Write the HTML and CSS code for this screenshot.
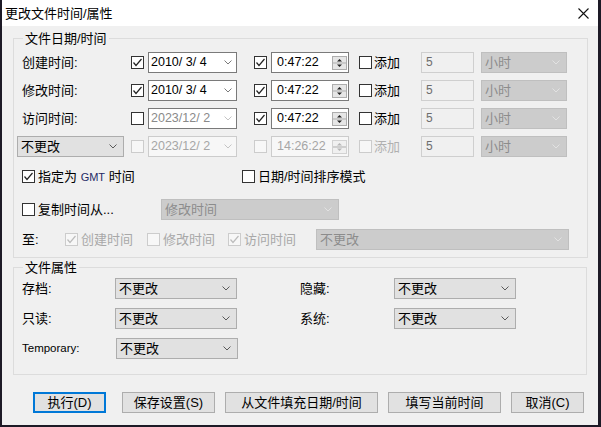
FILE: index.html
```html
<!DOCTYPE html>
<html lang="zh-CN">
<head>
<meta charset="utf-8">
<title>更改文件时间/属性</title>
<link rel="stylesheet" href="styles.css">
</head>
<body>
<div class="window">
  <div class="titlebar">
    <span class="title">更改文件时间/属性</span>
    <svg class="close" width="11" height="11" viewBox="0 0 11 11"><path d="M0.5 0.5L10.5 10.5M10.5 0.5L0.5 10.5" stroke="#111" stroke-width="1.1" fill="none"/></svg>
  </div>
  <div class="client">
    <div class="group g-time">
      <div class="legend">文件日期/时间</div>
      <div class="tgrid">
        <!-- row 1 -->
        <span class="lbl">创建时间:</span>
        <span class="cb"><svg viewBox="0 0 11 11"><polyline points="1.5,5.5 4,8.5 9.5,2" class="ck"/></svg></span>
        <span class="field date"><span class="val">2010/ 3/ 4</span><svg class="chev" viewBox="0 0 8 5"><polyline points="0.5,0.5 4,4 7.5,0.5"/></svg></span>
        <span class="cb"><svg viewBox="0 0 11 11"><polyline points="1.5,5.5 4,8.5 9.5,2" class="ck"/></svg></span>
        <span class="field time"><span class="val">0:47:22</span><svg class="spin" viewBox="0 0 15 14"><rect x="0.5" y="0.5" width="14" height="13" class="sp-box"/><line x1="1" y1="7" x2="14" y2="7" class="sp-line"/><polygon points="7.5,3 5,5.5 10,5.5" class="sp-tri"/><polygon points="7.5,11 5,8.5 10,8.5" class="sp-tri"/></svg></span>
        <span class="add"><span class="cb"></span><span>添加</span></span>
        <span class="edit">5</span>
        <span class="combo dis"><span class="val">小时</span><svg class="chev" viewBox="0 0 8 5"><polyline points="0.5,0.5 4,4 7.5,0.5"/></svg></span>

        <!-- row 2 -->
        <span class="lbl">修改时间:</span>
        <span class="cb"><svg viewBox="0 0 11 11"><polyline points="1.5,5.5 4,8.5 9.5,2" class="ck"/></svg></span>
        <span class="field date"><span class="val">2010/ 3/ 4</span><svg class="chev" viewBox="0 0 8 5"><polyline points="0.5,0.5 4,4 7.5,0.5"/></svg></span>
        <span class="cb"><svg viewBox="0 0 11 11"><polyline points="1.5,5.5 4,8.5 9.5,2" class="ck"/></svg></span>
        <span class="field time"><span class="val">0:47:22</span><svg class="spin" viewBox="0 0 15 14"><rect x="0.5" y="0.5" width="14" height="13" class="sp-box"/><line x1="1" y1="7" x2="14" y2="7" class="sp-line"/><polygon points="7.5,3 5,5.5 10,5.5" class="sp-tri"/><polygon points="7.5,11 5,8.5 10,8.5" class="sp-tri"/></svg></span>
        <span class="add"><span class="cb"></span><span>添加</span></span>
        <span class="edit">5</span>
        <span class="combo dis"><span class="val">小时</span><svg class="chev" viewBox="0 0 8 5"><polyline points="0.5,0.5 4,4 7.5,0.5"/></svg></span>

        <!-- row 3 -->
        <span class="lbl">访问时间:</span>
        <span class="cb"></span>
        <span class="field date gray"><span class="val">2023/12/ 2</span><svg class="chev" viewBox="0 0 8 5"><polyline points="0.5,0.5 4,4 7.5,0.5"/></svg></span>
        <span class="cb"><svg viewBox="0 0 11 11"><polyline points="1.5,5.5 4,8.5 9.5,2" class="ck"/></svg></span>
        <span class="field time"><span class="val">0:47:22</span><svg class="spin" viewBox="0 0 15 14"><rect x="0.5" y="0.5" width="14" height="13" class="sp-box"/><line x1="1" y1="7" x2="14" y2="7" class="sp-line"/><polygon points="7.5,3 5,5.5 10,5.5" class="sp-tri"/><polygon points="7.5,11 5,8.5 10,8.5" class="sp-tri"/></svg></span>
        <span class="add"><span class="cb"></span><span>添加</span></span>
        <span class="edit">5</span>
        <span class="combo dis"><span class="val">小时</span><svg class="chev" viewBox="0 0 8 5"><polyline points="0.5,0.5 4,4 7.5,0.5"/></svg></span>

        <!-- row 4 -->
        <span class="combo row-combo"><span class="val">不更改</span><svg class="chev" viewBox="0 0 8 5"><polyline points="0.5,0.5 4,4 7.5,0.5"/></svg></span>
        <span class="cb dis"></span>
        <span class="field date gray dis"><span class="val">2023/12/ 2</span><svg class="chev" viewBox="0 0 8 5"><polyline points="0.5,0.5 4,4 7.5,0.5"/></svg></span>
        <span class="cb dis"></span>
        <span class="field time gray dis"><span class="val">14:26:22</span><svg class="spin" viewBox="0 0 15 14"><rect x="0.5" y="0.5" width="14" height="13" class="sp-box"/><line x1="1" y1="7" x2="14" y2="7" class="sp-line"/><polygon points="7.5,3 5,5.5 10,5.5" class="sp-tri"/><polygon points="7.5,11 5,8.5 10,8.5" class="sp-tri"/></svg></span>
        <span class="add dis"><span class="cb dis"></span><span>添加</span></span>
        <span class="edit">5</span>
        <span class="combo dis"><span class="val">小时</span><svg class="chev" viewBox="0 0 8 5"><polyline points="0.5,0.5 4,4 7.5,0.5"/></svg></span>
      </div>

      <div class="opt-row r5">
        <span class="chk w220"><span class="cb"><svg viewBox="0 0 11 11"><polyline points="1.5,5.5 4,8.5 9.5,2" class="ck"/></svg></span><span>指定为 <span class="gmt">GMT</span> 时间</span></span>
        <span class="chk"><span class="cb"></span><span>日期/时间排序模式</span></span>
      </div>

      <div class="opt-row r6">
        <span class="chk w139"><span class="cb"></span><span>复制时间从...</span></span>
        <span class="combo dis w178"><span class="val">修改时间</span><svg class="chev" viewBox="0 0 8 5"><polyline points="0.5,0.5 4,4 7.5,0.5"/></svg></span>
      </div>

      <div class="opt-row r7">
        <span class="to">至:</span>
        <span class="chk dis w82"><span class="cb dis"><svg viewBox="0 0 11 11"><polyline points="1.5,5.5 4,8.5 9.5,2" class="ck"/></svg></span><span>创建时间</span></span>
        <span class="chk dis w81"><span class="cb dis"></span><span>修改时间</span></span>
        <span class="chk dis w88"><span class="cb dis"><svg viewBox="0 0 11 11"><polyline points="1.5,5.5 4,8.5 9.5,2" class="ck"/></svg></span><span>访问时间</span></span>
        <span class="combo dis w253"><span class="val">不更改</span><svg class="chev" viewBox="0 0 8 5"><polyline points="0.5,0.5 4,4 7.5,0.5"/></svg></span>
      </div>
    </div>

    <div class="group g-attr">
      <div class="legend">文件属性</div>
      <div class="agrid">
        <span class="lbl">存档:</span>
        <span class="combo"><span class="val">不更改</span><svg class="chev" viewBox="0 0 8 5"><polyline points="0.5,0.5 4,4 7.5,0.5"/></svg></span>
        <span></span>
        <span class="lbl">隐藏:</span>
        <span class="combo"><span class="val">不更改</span><svg class="chev" viewBox="0 0 8 5"><polyline points="0.5,0.5 4,4 7.5,0.5"/></svg></span>

        <span class="lbl">只读:</span>
        <span class="combo"><span class="val">不更改</span><svg class="chev" viewBox="0 0 8 5"><polyline points="0.5,0.5 4,4 7.5,0.5"/></svg></span>
        <span></span>
        <span class="lbl">系统:</span>
        <span class="combo"><span class="val">不更改</span><svg class="chev" viewBox="0 0 8 5"><polyline points="0.5,0.5 4,4 7.5,0.5"/></svg></span>

        <span class="lbl small">Temporary:</span>
        <span class="combo shift1"><span class="val">不更改</span><svg class="chev" viewBox="0 0 8 5"><polyline points="0.5,0.5 4,4 7.5,0.5"/></svg></span>
      </div>
    </div>

    <div class="buttons">
      <span class="btn primary w73">执行(D)</span>
      <span class="btn w93">保存设置(S)</span>
      <span class="btn w153">从文件填充日期/时间</span>
      <span class="btn w113">填写当前时间</span>
      <span class="btn w73">取消(C)</span>
    </div>
  </div>
</div>
</body>
</html>
```

FILE: styles.css
```css
* { box-sizing: border-box; }

html, body {
  margin: 0;
  padding: 0;
}

body {
  background: #1d1a26;
  width: 601px;
  height: 427px;
  overflow: hidden;
  font-family: "Liberation Sans", "Noto Sans CJK SC", sans-serif;
  font-size: 13px;
  line-height: 15px;
  color: #000;
}

.window {
  margin-left: 2px;
  width: 596px;
  height: 425px;
  background: #f0f0f0;
  overflow: hidden;
}

.titlebar {
  height: 26px;
  background: #fff;
  display: flex;
  align-items: center;
  justify-content: space-between;
  padding: 0 9px 0 3px;
}

.title {
  font-size: 13px;
  margin-top: 1px;
}

.close {
  display: block;
  margin-top: 1px;
}

.client {
  padding: 12px 10px 0 11px;
}

/* Group boxes */
.group {
  border: 1px solid #dcdcdc;
  width: 575px;
}

.legend {
  width: max-content;
  margin: -8px 0 0 6px;
  padding: 0 2px;
  background: #f0f0f0;
  line-height: 16px;
  height: 16px;
}

.g-time {
  padding: 0 0 7px 3px;
}

.g-attr {
  margin-top: 9px;
  width: 574px;
  padding: 0 0 15px 3px;
}

/* Time grid */
.tgrid {
  margin-top: 5px;
  display: grid;
  grid-template-columns: 114px 17px 106px 17px 88px 62px 60px 86px;
  grid-auto-rows: 21px;
  row-gap: 7px;
  align-items: center;
}

.lbl {
  padding-left: 5px;
  white-space: nowrap;
}

.lbl.small {
  font-size: 11.5px;
  padding-left: 6px;
}

/* Checkbox */
.cb {
  display: inline-block;
  width: 13px;
  height: 13px;
  border: 1px solid #333;
  background: #fff;
  flex: none;
}

.cb svg {
  display: block;
  width: 11px;
  height: 11px;
}

.ck {
  fill: none;
  stroke: #222;
  stroke-width: 1.2;
}

.cb.dis {
  border-color: #cccccc;
  background: #f7f7f7;
}

.cb.dis .ck {
  stroke: #bcbcbc;
}

/* Fields */
.field {
  height: 21px;
  border: 1px solid #7a7a7a;
  background: #fff;
  display: flex;
  align-items: center;
  justify-content: space-between;
  font-size: 12.5px;
}

.field.date {
  width: 89px;
  padding: 0 4px 0 2px;
}

.field.time {
  width: 78px;
  padding: 0 1px 0 5px;
}

.field.gray .val {
  color: #8a8a8a;
}

.field.dis {
  border-color: #cccccc;
  background: #f7f7f7;
}

.field.dis .val {
  color: #a6a6a6;
}

.chev {
  width: 8px;
  height: 5px;
  display: block;
  flex: none;
}

.chev polyline {
  fill: none;
  stroke: #5a5a5a;
  stroke-width: 1;
}

.field.date .chev polyline {
  stroke: #7a7a7a;
}

.field.date.gray .chev polyline {
  stroke: #c4c4c4;
}

.spin {
  width: 15px;
  height: 14px;
  display: block;
  flex: none;
}

.sp-box {
  fill: #e6e6e6;
  stroke: #adadad;
  stroke-width: 1;
}

.sp-line {
  stroke: #adadad;
  stroke-width: 1;
}

.sp-tri {
  fill: #222;
}

.field.dis .sp-box {
  fill: #f0f0f0;
  stroke: #d2d2d2;
}

.field.dis .sp-tri {
  fill: #b5b5b5;
}

.add {
  display: flex;
  align-items: center;
  gap: 2px;
}

.add.dis {
  color: #b0b0b0;
}

.edit {
  width: 53px;
  height: 21px;
  border: 1px solid #cfcfcf;
  background: #f0f0f0;
  color: #6d6d6d;
  font-size: 12px;
  display: flex;
  align-items: center;
  padding-left: 4px;
}

/* Combo boxes */
.combo {
  height: 21px;
  border: 1px solid #adadad;
  background: #e1e1e1;
  display: flex;
  align-items: center;
  justify-content: space-between;
  padding: 0 6px 0 3px;
  white-space: nowrap;
}

.combo.dis {
  width: 86px;
  background: #cccccc;
  border-color: #bfbfbf;
  color: #8c8c8c;
}

.combo.dis .chev polyline {
  stroke: #e2e2e2;
}

.row-combo {
  width: 107px;
}

/* Option rows */
.opt-row {
  display: flex;
  align-items: center;
  height: 21px;
  padding-left: 5px;
}

.r5 { margin-top: 9px; }
.r6 { margin-top: 12px; }
.r7 { margin-top: 9px; }

.chk {
  display: flex;
  align-items: center;
  gap: 3px;
  white-space: nowrap;
}

.chk.dis {
  color: #a8a8a8;
}

.gmt {
  font-size: 11px;
  color: #1f2a66;
}

.to {
  width: 43px;
}

.w220 { width: 220px; }
.w139 { width: 139px; }
.w82 { width: 82px; }
.w81 { width: 81px; }
.w88 { width: 88px; }
.combo.w178 { width: 178px; }
.combo.w253 { width: 253px; }

/* Attribute grid */
.agrid {
  margin-top: 2px;
  display: grid;
  grid-template-columns: 98px 122px 58px 99px 122px;
  grid-auto-rows: 21px;
  row-gap: 9px;
  align-items: center;
}

.agrid .combo {
  width: 122px;
}

.agrid .lbl {
  padding-left: 5px;
}

.agrid .combo.shift1 {
  margin-left: 1px;
}

/* Buttons */
.buttons {
  margin-top: 17px;
  display: flex;
  gap: 10px;
  padding-left: 20px;
}

.btn {
  height: 21px;
  border: 1px solid #adadad;
  background: #e1e1e1;
  display: flex;
  align-items: center;
  justify-content: center;
  white-space: nowrap;
}

.btn.primary {
  border: 2px solid #0078d7;
  margin-right: 6px;
}

.w73 { width: 73px; }
.w93 { width: 93px; }
.w153 { width: 153px; }
.w113 { width: 113px; }
```
